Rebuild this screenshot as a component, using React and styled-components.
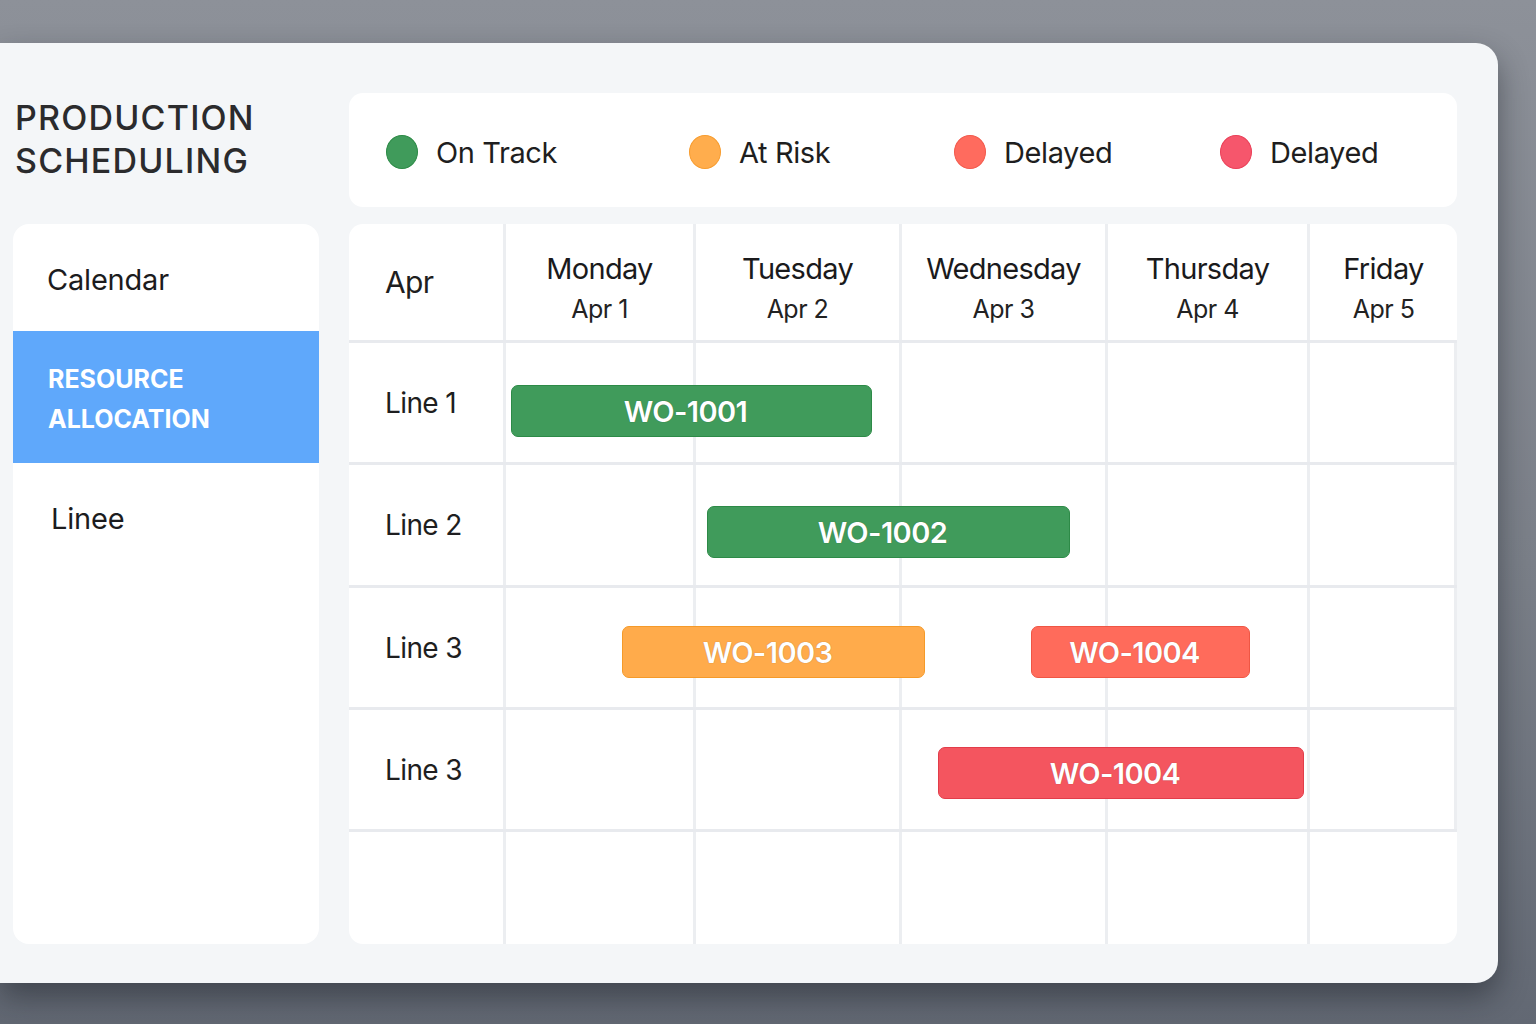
import styled, { createGlobalStyle } from "styled-components";

const GlobalStyle = createGlobalStyle`
  html, body {
    margin: 0;
    padding: 0;
  }
  body {
    width: 1536px;
    height: 1024px;
    overflow: hidden;
    background: linear-gradient(180deg, #8d9199 0%, #7a7f88 55%, #626873 100%);
    font-family: "Inter", "Noto Sans", sans-serif;
    color: #1c1c1e;
  }
`;

const Panel = styled.div`
  margin-top: 43px;
  width: 1498px;
  height: 940px;
  box-sizing: border-box;
  background: #f4f6f8;
  border-radius: 0 22px 22px 0;
  box-shadow: 0 14px 30px rgba(20, 24, 32, 0.45);
  padding: 50px 41px 39px 13px;
  display: grid;
  grid-template-columns: 306px 1108px;
  grid-template-rows: 114px 720px;
  column-gap: 30px;
  row-gap: 17px;
`;

const Title = styled.h1`
  margin: 0;
  padding: 3px 0 0 2px;
  font-size: 34px;
  font-weight: 500;
  line-height: 43px;
  letter-spacing: 1.2px;
  color: #2b2b2d;
`;

const Legend = styled.div`
  background: #fff;
  border-radius: 14px;
  display: flex;
  align-items: center;
  padding: 4px 0 0 37px;
  box-sizing: border-box;
`;

const LegendItem = styled.div`
  display: flex;
  align-items: center;
  gap: 18px;
  width: ${(p) => p.$w}px;
  font-size: 29px;
  letter-spacing: -0.4px;
  color: #1e1e20;
`;

const Dot = styled.span`
  width: 32px;
  height: 34px;
  border-radius: 50%;
  background: ${(p) => p.$color};
  border: 1.5px solid ${(p) => p.$edge};
  box-sizing: border-box;
`;

const Sidebar = styled.nav`
  background: #fff;
  border-radius: 16px;
  overflow: hidden;
`;

const NavItem = styled.div`
  height: ${(p) => p.$h}px;
  display: flex;
  align-items: center;
  padding-left: ${(p) => p.$pad}px;
  padding-top: ${(p) => p.$top || 0}px;
  box-sizing: border-box;
  font-size: 29px;
  letter-spacing: -0.2px;
  color: #1c1c1e;
`;

const ActiveItem = styled.div`
  height: 132px;
  background: #5fa8fb;
  display: flex;
  align-items: center;
  padding-left: 35px;
  padding-top: 4px;
  box-sizing: border-box;
  color: #fff;
  font-size: 25px;
  font-weight: 700;
  line-height: 40px;
  letter-spacing: 0;
`;

const Board = styled.div`
  background: #fff;
  border-radius: 14px;
  overflow: hidden;
  display: flex;
  flex-direction: column;
`;

const Row = styled.div`
  position: relative;
  display: grid;
  grid-template-columns: 157px 190px 206px 206px 202px 147px;
  height: ${(p) => p.$h}px;
  box-sizing: border-box;
  border-bottom: ${(p) => (p.$last ? "none" : "3px solid #e8eaee")};
`;

const Cell = styled.div`
  border-right: 3px solid #eceef1;
  &:last-child {
    border-right: none;
  }
`;

const LabelCell = styled(Cell)`
  display: flex;
  align-items: center;
  padding-left: 36px;
  font-size: ${(p) => p.$size}px;
  letter-spacing: -0.6px;
  color: #1e1e20;
`;

const DayCell = styled(Cell)`
  display: flex;
  flex-direction: column;
  align-items: center;
  padding-top: 25px;
  color: #1a1a1c;
`;

const DayName = styled.div`
  font-size: 29px;
  letter-spacing: -0.7px;
  line-height: 40px;
`;

const DayDate = styled.div`
  font-size: 25px;
  letter-spacing: -0.5px;
  line-height: 40px;
  color: #222;
`;

const Bar = styled.div`
  position: absolute;
  height: 52px;
  box-sizing: border-box;
  border-radius: 7px;
  background: ${(p) => p.$bg};
  border: 1.5px solid ${(p) => p.$edge};
  display: flex;
  align-items: center;
  justify-content: center;
  padding-right: 12px;
  color: #fff;
  font-size: 29px;
  font-weight: 600;
  letter-spacing: -0.6px;
  text-shadow: 0 0 1px rgba(0, 0, 0, 0.35);
`;

const STATUS = {
  green: { bg: "#409b5b", edge: "#2d8a47" },
  orange: { bg: "#ffab4b", edge: "#f59a29" },
  salmon: { bg: "#ff6b5b", edge: "#ef5644" },
  red: { bg: "#f4555f", edge: "#e23d4a" },
};

const days = [
  ["Monday", "Apr 1"],
  ["Tuesday", "Apr 2"],
  ["Wednesday", "Apr 3"],
  ["Thursday", "Apr 4"],
  ["Friday", "Apr 5"],
];

const rows = [
  { label: "Line 1", h: 122, bars: [{ id: "WO-1001", left: 162, width: 361, top: 42, s: "green" }] },
  { label: "Line 2", h: 123, bars: [{ id: "WO-1002", left: 358, width: 363, top: 41, s: "green" }] },
  {
    label: "Line 3",
    h: 122,
    bars: [
      { id: "WO-1003", left: 273, width: 303, top: 38, s: "orange" },
      { id: "WO-1004", left: 682, width: 219, top: 38, s: "salmon" },
    ],
  },
  { label: "Line 3", h: 122, bars: [{ id: "WO-1004", left: 589, width: 366, top: 37, s: "red" }] },
];

const legend = [
  { label: "On Track", w: 303, bg: "#409b5b", edge: "#2c8a46" },
  { label: "At Risk", w: 265, bg: "#ffad4d", edge: "#f79c2f" },
  { label: "Delayed", w: 266, bg: "#ff6b5e", edge: "#f25a4c" },
  { label: "Delayed", w: 200, bg: "#f6566c", edge: "#ea4058" },
];

export default function App() {
  return (
    <>
      <GlobalStyle />
      <Panel>
        <Title>
          PRODUCTION
          <br />
          SCHEDULING
        </Title>

        <Legend>
          {legend.map((l, i) => (
            <LegendItem key={i} $w={l.w}>
              <Dot $color={l.bg} $edge={l.edge} />
              {l.label}
            </LegendItem>
          ))}
        </Legend>

        <Sidebar>
          <NavItem $h={107} $pad={34} $top={4}>
            Calendar
          </NavItem>
          <ActiveItem>
            RESOURCE
            <br />
            ALLOCATION
          </ActiveItem>
          <NavItem $h={110} $pad={38}>
            Linee
          </NavItem>
        </Sidebar>

        <Board>
          <Row $h={119}>
            <LabelCell $size={30}>Apr</LabelCell>
            {days.map(([name, date]) => (
              <DayCell key={name}>
                <DayName>{name}</DayName>
                <DayDate>{date}</DayDate>
              </DayCell>
            ))}
          </Row>

          {rows.map((r, i) => (
            <Row key={i} $h={r.h}>
              <LabelCell $size={28}>{r.label}</LabelCell>
              <Cell />
              <Cell />
              <Cell />
              <Cell />
              <Cell />
              {r.bars.map((b, j) => (
                <Bar
                  key={j}
                  $bg={STATUS[b.s].bg}
                  $edge={STATUS[b.s].edge}
                  style={{ left: b.left, width: b.width, top: b.top }}
                >
                  {b.id}
                </Bar>
              ))}
            </Row>
          ))}

          <Row $h={112} $last>
            <Cell />
            <Cell />
            <Cell />
            <Cell />
            <Cell />
            <Cell />
          </Row>
        </Board>
      </Panel>
    </>
  );
}
